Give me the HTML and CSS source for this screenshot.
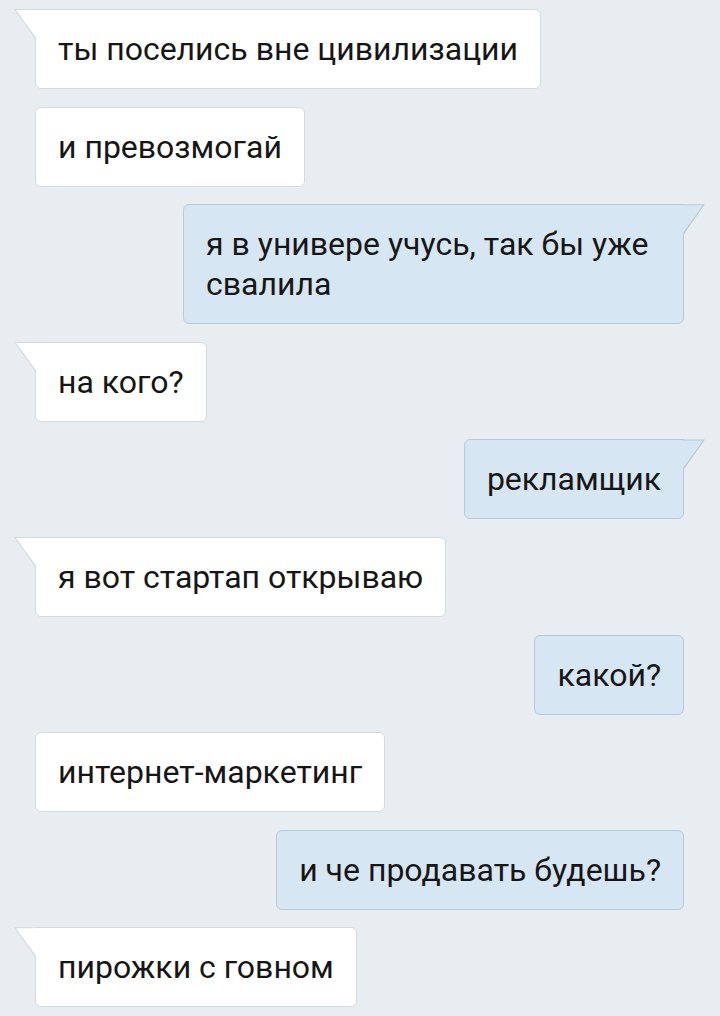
FILE: index.html
```html
<!DOCTYPE html>
<html lang="ru">
<head>
    <meta charset="UTF-8">
    <meta name="viewport" content="width=device-width, initial-scale=1.0">
    <title>Диалог</title>
    <link rel="stylesheet" href="styles.css">
</head>
<body>
    <div class="chat">
        <div class="msg in tail">ты поселись вне цивилизации</div>
        <div class="msg in">и превозмогай</div>
        <div class="msg out tail">я в универе учусь, так бы уже свалила</div>
        <div class="msg in tail">на кого?</div>
        <div class="msg out tail">рекламщик</div>
        <div class="msg in tail">я вот стартап открываю</div>
        <div class="msg out">какой?</div>
        <div class="msg in">интернет-маркетинг</div>
        <div class="msg out">и че продавать будешь?</div>
        <div class="msg in tail">пирожки с говном</div>
    </div>
</body>
</html>
```

FILE: styles.css
```css
body {
    margin: 0;
    background: #e7edf0;
    font-family: Roboto, 'Noto Sans', sans-serif;
    color: #161616;
    height: 1016px;
    overflow: hidden;
}
.chat {
    display: flex;
    flex-direction: column;
    gap: 17.6px;
    padding: 9px 36px 0 35px;
}
.msg {
    position: relative;
    padding: 19px 22px;
    font-size: 32px;
    line-height: 40px;
    border-radius: 6px;
    border: 1px solid #d3dbe0;
}
.in {
    align-self: flex-start;
    background: #ffffff;
}
.out {
    align-self: flex-end;
    max-width: 455px;
    background: #d6e6f3;
    border-color: #b7c9d8;
}
.in.tail {
    border-top-left-radius: 0;
}
.out.tail {
    border-top-right-radius: 0;
}
.tail::before,
.tail::after {
    content: '';
    position: absolute;
}
.in.tail::before {
    left: -22px;
    top: -1px;
    width: 22px;
    height: 31px;
    background: #d3dbe0;
    clip-path: polygon(0 0, 100% 0, 100% 100%);
}
.in.tail::after {
    left: -20px;
    top: 0;
    width: 21px;
    height: 29px;
    background: #ffffff;
    clip-path: polygon(0 0, 100% 0, 100% 100%);
}
.out.tail::before {
    right: -22px;
    top: -1px;
    width: 22px;
    height: 31px;
    background: #b7c9d8;
    clip-path: polygon(0 0, 100% 0, 0 100%);
}
.out.tail::after {
    right: -20px;
    top: 0;
    width: 21px;
    height: 29px;
    background: #d6e6f3;
    clip-path: polygon(0 0, 100% 0, 0 100%);
}
```
